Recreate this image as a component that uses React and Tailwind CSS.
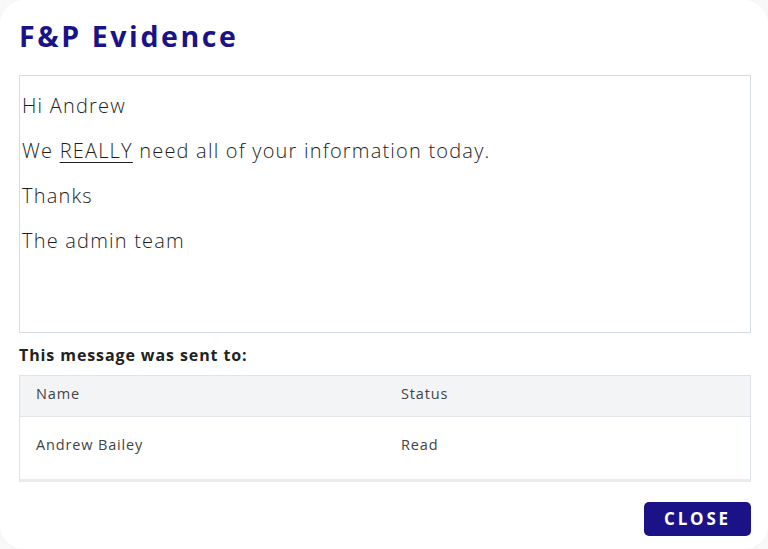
export default function App() {
  const font = { fontFamily: '"Open Sans", "Noto Sans", sans-serif' };

  return (
    <div className="w-[768px] h-[549px] bg-[#fafafa] overflow-hidden" style={font}>
      <div className="h-full bg-white rounded-[24px] shadow-[0_0_18px_rgba(0,0,0,0.03)] pl-[19px] pr-[17px] pt-[15px] flex flex-col">
        <h1 className="text-[28.5px] leading-[42px] font-bold tracking-[2.6px] text-[#1c1288]">F&amp;P Evidence</h1>

        <div className="mt-[18px] h-[258px] border border-[#d6dde3] px-[2px] pt-[17px] text-[20px] tracking-[1.2px] text-[#1e1e1e] font-light">
          <p className="leading-[26px]">Hi Andrew</p>
          <p className="mt-[19px] leading-[26px]">
            We <span className="underline underline-offset-[4px] decoration-1">REALLY</span> need all of your information today.
          </p>
          <p className="mt-[19px] leading-[26px]">Thanks</p>
          <p className="mt-[19px] leading-[26px]">The admin team</p>
        </div>

        <div className="mt-[11px] text-[16px] leading-[22px] font-bold tracking-[0.9px] text-[#222]">This message was sent to:</div>

        <div className="mt-[9px] border border-[#dde3e8] border-b-[3px] border-b-[#e9ecef] text-[14.5px] text-[#444] tracking-[0.85px]">
          <div className="flex items-center h-[41px] pb-[4px] bg-[#f3f4f6] border-b border-[#e1e5e9]">
            <div className="w-[381px] pl-[16px]">Name</div>
            <div>Status</div>
          </div>
          <div className="flex items-center h-[62px] pb-[6px] bg-white">
            <div className="w-[381px] pl-[16px]">Andrew Bailey</div>
            <div>Read</div>
          </div>
        </div>

        <div className="flex justify-end mt-[20px]">
          <button className="w-[107px] h-[34px] rounded-[5px] bg-[#1c1288] text-white text-[17px] font-bold tracking-[2.8px]">
            CLOSE
          </button>
        </div>
      </div>
    </div>
  );
}
